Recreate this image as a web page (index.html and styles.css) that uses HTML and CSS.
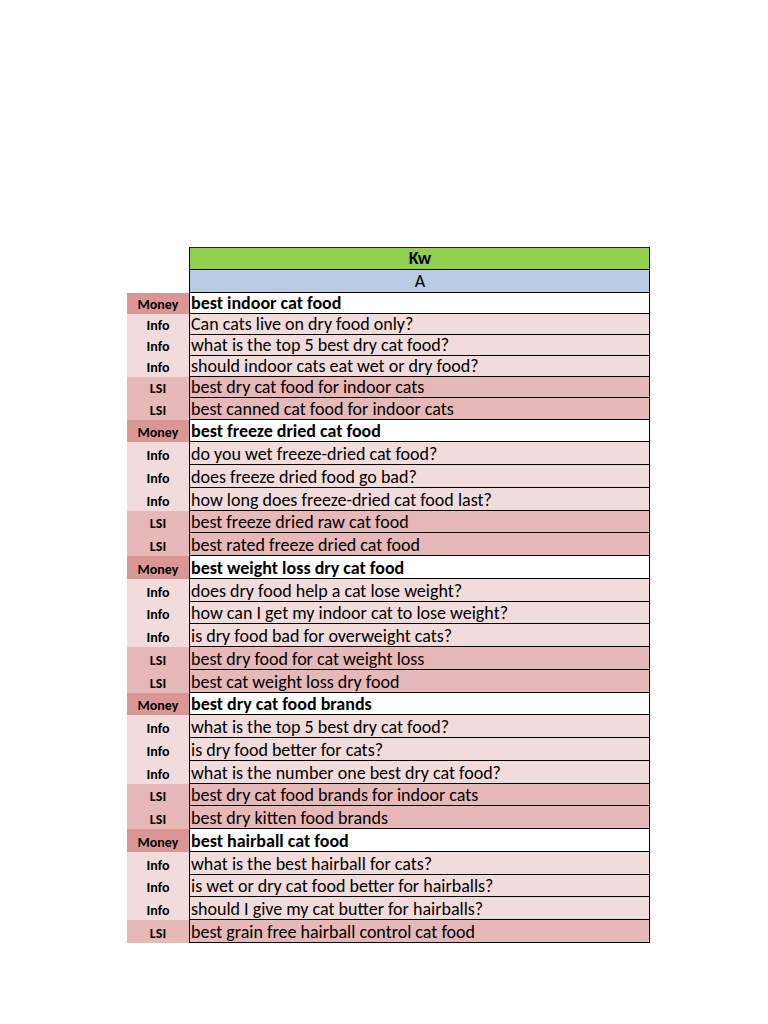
FILE: index.html
```html
<!DOCTYPE html>
<html lang="en">
<head>
<meta charset="utf-8">
<title>Keywords</title>
<link rel="stylesheet" href="styles.css">
</head>
<body>
<div class="sheet">
  <div class="row head"><div class="tag"></div><div class="cell kw">Kw</div></div>
  <div class="row head"><div class="tag"></div><div class="cell col-a">A</div></div>

  <div class="row short money"><div class="tag">Money</div><div class="cell">best indoor cat food</div></div>
  <div class="row short info"><div class="tag">Info</div><div class="cell">Can cats live on dry food only?</div></div>
  <div class="row short info"><div class="tag">Info</div><div class="cell">what is the top 5 best dry cat food?</div></div>
  <div class="row short info"><div class="tag">Info</div><div class="cell">should indoor cats eat wet or dry food?</div></div>
  <div class="row short lsi"><div class="tag">LSI</div><div class="cell">best dry cat food for indoor cats</div></div>
  <div class="row short lsi"><div class="tag">LSI</div><div class="cell">best canned cat food for indoor cats</div></div>

  <div class="row money"><div class="tag">Money</div><div class="cell">best freeze dried cat food</div></div>
  <div class="row info"><div class="tag">Info</div><div class="cell">do you wet freeze-dried cat food?</div></div>
  <div class="row info"><div class="tag">Info</div><div class="cell">does freeze dried food go bad?</div></div>
  <div class="row info"><div class="tag">Info</div><div class="cell">how long does freeze-dried cat food last?</div></div>
  <div class="row lsi"><div class="tag">LSI</div><div class="cell">best freeze dried raw cat food</div></div>
  <div class="row lsi"><div class="tag">LSI</div><div class="cell">best rated freeze dried cat food</div></div>

  <div class="row money"><div class="tag">Money</div><div class="cell">best weight loss dry cat food</div></div>
  <div class="row info"><div class="tag">Info</div><div class="cell">does dry food help a cat lose weight?</div></div>
  <div class="row info"><div class="tag">Info</div><div class="cell">how can I get my indoor cat to lose weight?</div></div>
  <div class="row info"><div class="tag">Info</div><div class="cell">is dry food bad for overweight cats?</div></div>
  <div class="row lsi"><div class="tag">LSI</div><div class="cell">best dry food for cat weight loss</div></div>
  <div class="row lsi"><div class="tag">LSI</div><div class="cell">best cat weight loss dry food</div></div>

  <div class="row money"><div class="tag">Money</div><div class="cell">best dry cat food brands</div></div>
  <div class="row info"><div class="tag">Info</div><div class="cell">what is the top 5 best dry cat food?</div></div>
  <div class="row info"><div class="tag">Info</div><div class="cell">is dry food better for cats?</div></div>
  <div class="row info"><div class="tag">Info</div><div class="cell">what is the number one best dry cat food?</div></div>
  <div class="row lsi"><div class="tag">LSI</div><div class="cell">best dry cat food brands for indoor cats</div></div>
  <div class="row lsi"><div class="tag">LSI</div><div class="cell">best dry kitten food brands</div></div>

  <div class="row money"><div class="tag">Money</div><div class="cell">best hairball cat food</div></div>
  <div class="row info"><div class="tag">Info</div><div class="cell">what is the best hairball for cats?</div></div>
  <div class="row info"><div class="tag">Info</div><div class="cell">is wet or dry cat food better for hairballs?</div></div>
  <div class="row info"><div class="tag">Info</div><div class="cell">should I give my cat butter for hairballs?</div></div>
  <div class="row lsi"><div class="tag">LSI</div><div class="cell">best grain free hairball control cat food</div></div>
</div>
</body>
</html>
```

FILE: styles.css
```css
html, body {
  margin: 0;
  padding: 0;
  background: #ffffff;
}

body {
  font-family: Carlito, Lato, "Liberation Sans", sans-serif;
  color: #000;
}

.sheet {
  padding: 247px 0 0 127px;
  display: flex;
  flex-direction: column;
}

.row {
  display: grid;
  grid-template-columns: 62px 461px;
  height: 22.75px;
}

.row.short {
  height: 21.1px;
}

.row.head {
  height: 23px;
}

.tag {
  display: flex;
  align-items: flex-end;
  justify-content: center;
  font-size: 14px;
  font-weight: 700;
  line-height: 1;
  padding-bottom: 2px;
  box-sizing: border-box;
}

.cell {
  box-sizing: border-box;
  border-left: 1px solid #000;
  border-right: 1px solid #000;
  border-bottom: 1px solid #000;
  font-size: 18px;
  line-height: 1;
  padding: 0 0 1px 1px;
  display: flex;
  align-items: flex-end;
  white-space: nowrap;
  overflow: hidden;
}

.head .cell {
  justify-content: center;
  padding-bottom: 2px;
}

.kw {
  background: #92d050;
  font-weight: 700;
  border-top: 1px solid #222;
}

.col-a {
  background: #b8cce4;
}

.money .tag {
  background: #da9694;
}

.money .cell {
  background: #ffffff;
  font-weight: 700;
}

.info .tag,
.info .cell {
  background: #f2dcdb;
}

.lsi .tag,
.lsi .cell {
  background: #e6b8b7;
}
```
